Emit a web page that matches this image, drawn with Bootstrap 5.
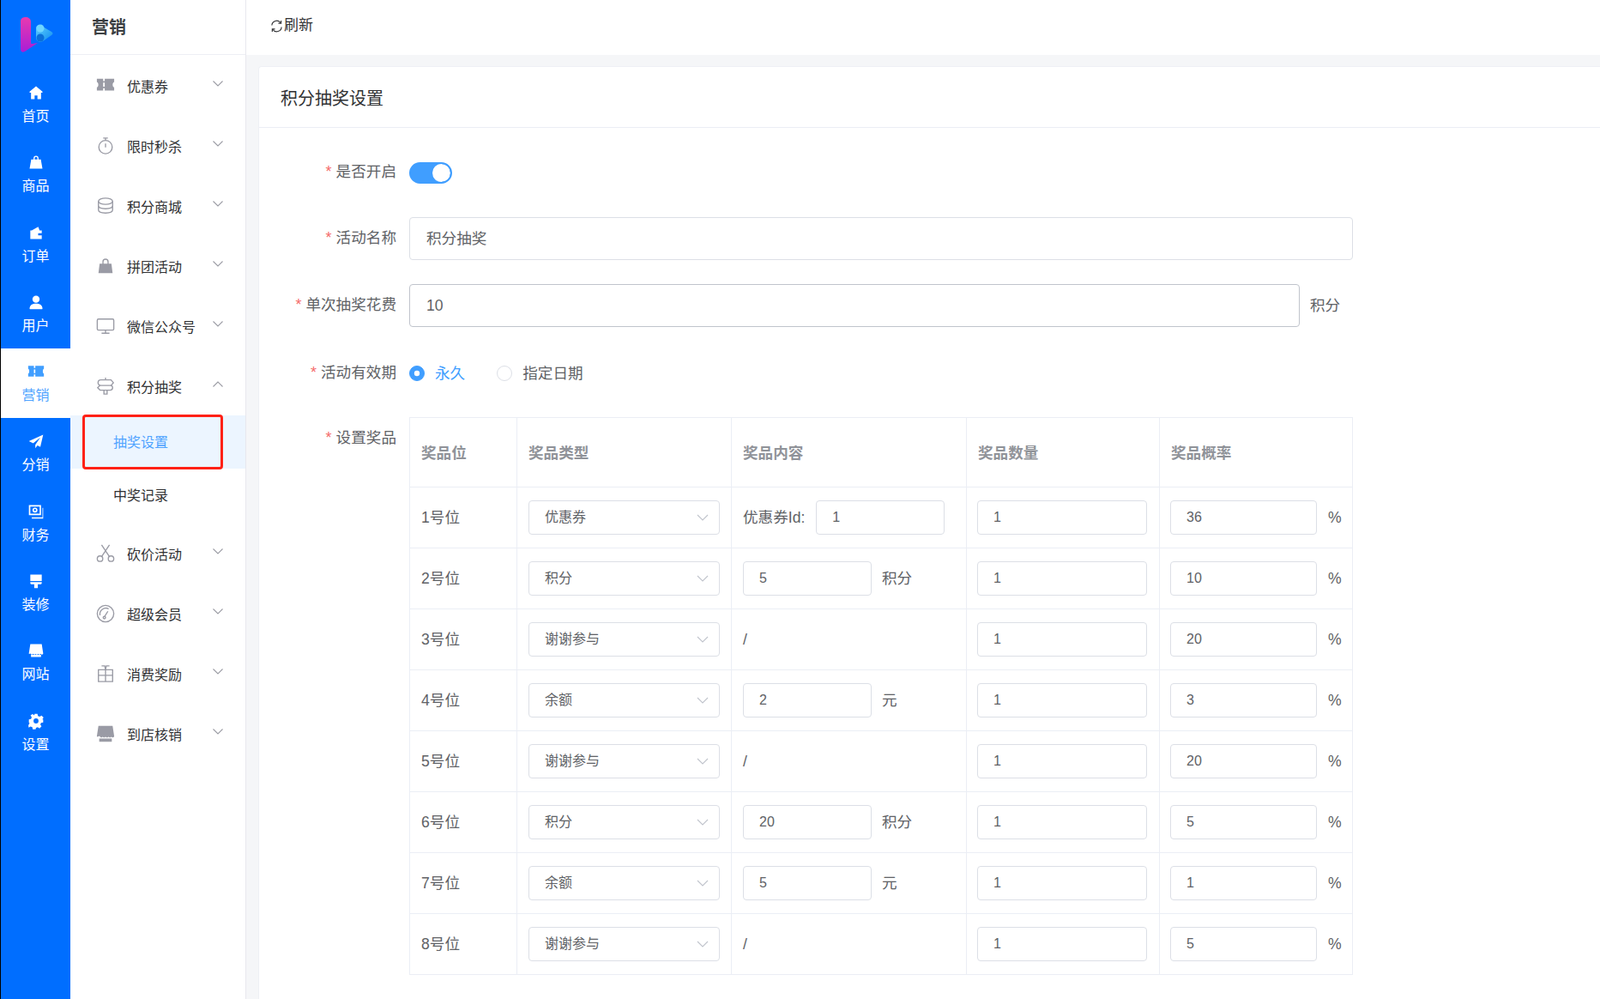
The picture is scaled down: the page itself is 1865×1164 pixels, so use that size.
<!DOCTYPE html>
<html lang="zh-CN">
<head>
  <meta charset="UTF-8">
  <title>积分抽奖设置</title>
  <link rel="stylesheet" href="https://cdn.jsdelivr.net/npm/bootstrap@5.3.0/dist/css/bootstrap.min.css">
  <style>
    html, body { height: 100%; overflow: hidden; }
    body { font-family: "Liberation Sans", "Noto Sans CJK SC", sans-serif; color: #606266; background: #f5f6f8; }
    .shell { width: 1865px; height: 1164px; }

    .rail { width: 82px; background: #006eff; border-left: 1px solid #000; color: #fff; flex: none; }
    .rail-logo { height: 81px; }
    .rail-item { height: 81.3px; font-size: 16px; padding-top: 17px; }
    .rail-item svg { width: 20px; height: 20px; fill: #fff; display: block; margin-bottom: 3px; }
    .rail-item span { line-height: 30px; }
    .rail-item.is-on { background: #fff; color: #4fa3ff; }
    .rail-item.is-on svg { fill: #409eff; }

    .side { width: 205px; background: #fff; border-right: 1px solid #e8e8ee; flex: none; }
    .side-head { height: 64px; border-bottom: 1px solid #eeeff4; font-size: 20px; font-weight: 700; color: #3c4043; padding-left: 25px; line-height: 64px; }
    .side-list { padding-top: 2px; }
    .side-row { height: 70px; padding-left: 30px; padding-right: 26px; font-size: 16px; color: #303133; }
    .side-row.is-open { margin-bottom: -2px; }
    .side-row .ico { width: 22px; height: 22px; margin-right: 14px; margin-top: -3px; flex: none; }
    .side-row .lbl { padding-top: 1px; }
    .side-row .chev { width: 12px; height: 7px; margin-left: auto; margin-top: -8px; }
    .side-sub { height: 62px; padding-left: 50px; padding-top: 2px; font-size: 16px; color: #303133; }
    .side-sub.is-on { background: #ecf5ff; color: #4fa3ff; }
    .mark-box { position: absolute; left: 14px; top: -1px; width: 164px; height: 64px; border: 3.5px solid #ff2116; border-radius: 4px; }
    .sub-end { margin-bottom: 3px; }

    .topbar { height: 64px; background: #fff; padding-left: 28px; padding-bottom: 4px; font-size: 17px; color: #303133; }
    .topbar svg { width: 15px; height: 15px; margin-right: 1px; margin-top: 1px; }
    .sheet { margin: 13px 0 0 14px; background: #fff; border: 1px solid #eef0f5; border-right: 0; border-radius: 4px 0 0 0; height: 1100px; }
    .sheet-title { height: 71px; line-height: 75px; padding-left: 25px; font-size: 20px; color: #303133; border-bottom: 1px solid #ebeef5; }
    .sheet-body { padding: 27px 0 0 0; width: 1275px; }

    .fr { margin-bottom: 27px; }
    .fr:nth-child(2) { margin-bottom: 28px; }
    .fr:nth-child(3) { margin-bottom: 29px; }
    .fr:nth-child(4) { margin-bottom: 26px; }
    .fr-label { width: 160px; height: 50px; flex: none; text-align: right; font-size: 17.6px; line-height: 49px; margin-right: 15px; }
    .fr-label i { color: #f56c6c; font-style: normal; margin-right: 5px; font-size: 18px; line-height: 0; }
    .fr-ctl { width: 1100px; min-height: 50px; }

    .form-control.big { height: 50px; font-size: 17.6px; color: #606266; padding: 0 19px 3px; border: 1px solid #dcdfe6; border-radius: 4px; }
    .form-control.big.hov { border-color: #c0c4cc; padding: 0 19px; }
    .unit-big { font-size: 17.6px; width: 62px; padding-left: 12px; }

    .form-switch .sw.form-check-input { width: 50px; height: 25px; margin: 0; background-color: #409eff; border: 2px solid #409eff; border-radius: 13px;
      background-image: url("data:image/svg+xml,%3csvg xmlns='http://www.w3.org/2000/svg' viewBox='-4 -4 8 8'%3e%3ccircle r='4' fill='%23fff'/%3e%3c/svg%3e"); }
    .rd.form-check-input { width: 18px; height: 18px; margin: 0 12px 0 0; border-color: #dcdfe6; }
    .rd.form-check-input:checked { background-color: #409eff; border-color: #409eff;
      background-image: url("data:image/svg+xml,%3csvg xmlns='http://www.w3.org/2000/svg' viewBox='-4 -4 8 8'%3e%3ccircle r='1.6' fill='%23fff'/%3e%3c/svg%3e"); }
    .rd-txt { font-size: 17.6px; }
    .rd-txt.is-on { color: #409eff; }
    .rd-gap { margin-right: 37px; }

    .prize { width: 1099px; table-layout: fixed; margin: 0; border-color: #ebeef5; font-size: 17.6px; }
    .prize > :not(caption) > * > * { padding: 0 13px; color: #606266; vertical-align: middle; box-shadow: none; }
    .prize thead th { height: 81px; padding-top: 2px; color: #909399; font-weight: 700; }
    .prize tbody td { height: 71px; }
    .prize tbody td.cell-qty { padding: 0 14px 0 12px; }
    .prize tbody td.cell-rate { padding-left: 12px; }
    .c1 { width: 125px; } .c2 { width: 250px; } .c3 { width: 274px; } .c4 { width: 225px; } .c5 { width: 225px; }
    .cell-in { height: 40px; font-size: 16px; color: #606266; border: 1px solid #dcdfe6; border-radius: 4px; padding: 0 18px; }
    .form-select.cell-in { width: 223px; background-size: 14px 8px; background-position: right 12px center;
      background-image: url("data:image/svg+xml,%3csvg xmlns='http://www.w3.org/2000/svg' viewBox='0 0 14 8'%3e%3cpath fill='none' stroke='%23c0c4cc' stroke-width='1.1' d='M1 1l6 6 6-6'/%3e%3c/svg%3e"); }
    .id-lbl { margin-right: 13px; }
    .w-150 { width: 150px; flex: none; }
    .w-pct { width: 171px; flex: none; }
    .pct { margin-left: 13px; }
    .chev-s { stroke: #9a9ba3; fill: none; stroke-width: 1.1; }
    .ico { color: #9a9ba5; }
  </style>
</head>
<body>
  <div class="shell d-flex">
    <nav class="rail d-flex flex-column">
      <div class="rail-logo d-flex align-items-center justify-content-center">
        <svg width="42" height="42" viewBox="0 0 42 42">
          <defs>
            <linearGradient id="lgP" x1="0" y1="0" x2="0" y2="1"><stop offset="0" stop-color="#e83ab0"/><stop offset="1" stop-color="#a91ed6"/></linearGradient>
            <linearGradient id="lgB" x1="0" y1="0" x2="1" y2="1"><stop offset="0" stop-color="#5fd0ff"/><stop offset="1" stop-color="#0f8cf0"/></linearGradient>
          </defs>
          <path fill="url(#lgP)" d="M3 5c0-4 3-5 6-5s6 2 6 5v25c0 1 1 1 2 1l6-1-15 10c-3 2-5 0-5-3z"/>
          <path fill="url(#lgB)" d="M21 13c0-3 3-5 6-3l12 7c2 1 2 3 0 4l-10 7c-3 2-8 0-8-4z"/>
          <circle cx="26" cy="13" r="4.500" fill="#6fd6ff"/>
          <circle cx="26" cy="24" r="4.500" fill="#0b6fd8"/>
        </svg>
      </div>
      <div id="rail"></div>
    </nav>

    <aside class="side">
      <div class="side-head">营销</div>
      <div class="side-list" id="side"></div>
    </aside>

    <main class="flex-grow-1 overflow-hidden">
      <div class="topbar d-flex align-items-center">
        <svg viewBox="0 0 16 16" fill="none" stroke="#303133" stroke-width="1.2"><path d="M2 7a6 6 0 0 1 11-3M14 9a6 6 0 0 1-11 3"/><path d="M13.500 1v3.400h-3.400M2.500 15v-3.400h3.400"/></svg>
        <span>刷新</span>
      </div>
      <div class="sheet">
        <div class="sheet-title">积分抽奖设置</div>
        <form class="sheet-body">
          <div class="fr d-flex">
            <label class="fr-label"><i>*</i>是否开启</label>
            <div class="fr-ctl d-flex align-items-center form-switch p-0">
              <input class="form-check-input sw" type="checkbox" checked>
            </div>
          </div>
          <div class="fr d-flex">
            <label class="fr-label"><i>*</i>活动名称</label>
            <div class="fr-ctl"><input class="form-control big" value="积分抽奖"></div>
          </div>
          <div class="fr d-flex">
            <label class="fr-label"><i>*</i>单次抽奖花费</label>
            <div class="fr-ctl d-flex align-items-center">
              <input class="form-control big hov" value="10">
              <span class="unit-big flex-shrink-0">积分</span>
            </div>
          </div>
          <div class="fr d-flex">
            <label class="fr-label"><i>*</i>活动有效期</label>
            <div class="fr-ctl d-flex align-items-center">
              <input class="form-check-input rd" type="radio" name="period" checked>
              <span class="rd-txt is-on rd-gap">永久</span>
              <input class="form-check-input rd" type="radio" name="period">
              <span class="rd-txt">指定日期</span>
            </div>
          </div>
          <div class="fr d-flex">
            <label class="fr-label"><i>*</i>设置奖品</label>
            <table class="table table-bordered prize">
              <colgroup><col class="c1"><col class="c2"><col class="c3"><col class="c4"><col class="c5"></colgroup>
              <thead><tr><th>奖品位</th><th>奖品类型</th><th>奖品内容</th><th>奖品数量</th><th>奖品概率</th></tr></thead>
              <tbody id="prizes"></tbody>
            </table>
          </div>
        </form>
      </div>
    </main>
  </div>

  <script src="https://cdn.jsdelivr.net/npm/bootstrap@5.3.0/dist/js/bootstrap.bundle.min.js"></script>
  <script>
    const railIcons = {
      home: '<path d="M12 3 3 10.500V12h2v9h5v-5h4v5h5v-9h2v-1.500z"/>',
      bag: '<path d="M8.500 8V6.500a3.500 3.500 0 0 1 7 0V8h3.200L21 21H3L5.300 8zm1.600 0h3.800V6.500a1.900 1.900 0 0 0-3.800 0z"/>',
      wallet: '<path d="M4 9h2l9-5 2 5h3v12H4zM15 13v3h5v-3z"/>',
      user: '<circle cx="12" cy="8" r="5"/><path d="M3 21c0-5 4-7 9-7s9 2 9 7c0 1-1 1-1 1H4s-1 0-1-1z"/>',
      ticket: '<path d="M1 4h8v3h2V4h12v4c-2 .5-2 6 0 7v4H11v-3H9v3H1v-4c2-1 2-6.500 0-7zm8 5v5h2V9z"/>',
      send: '<path d="M22 3 2 12l6 3 10-8-7 10v5l3-4 4 2z"/>',
      money: '<path fill-rule="evenodd" d="M2 3h17v14H2zm2 2v10h13V5zm6.500 1.500a3.500 3.500 0 1 1 0 7 3.500 3.500 0 0 1 0-7zm0 2a1.500 1.500 0 1 0 0 3 1.500 1.500 0 0 0 0-3zM21 7h1v15H6v-2h15z"/>',
      brush: '<path d="M4 3h16v9H4zM4 13.500h16V15c0 1-1 1.500-2 1.500h-3.500V22h-5v-5.500H6c-1 0-2-.5-2-1.500z"/>',
      store: '<path d="M4 3h16l2 13c0 2-3 2-3.500.5-.5 1.500-3 1.500-3.500 0-.5 1.500-3.500 1.500-3.500 0-.5 1.500-3 1.500-3.500 0-.5 1.500-3 1.500-3.500 0S2 18 2 16zM5 18h14v3H5z"/>',
      gear: '<path fill-rule="evenodd" d="M10 2h4l.6 3 2.500 1.100 2.600-1.700 2.800 2.800-1.700 2.600L22 10v4l-3 .6-1 2.400 1.700 2.600-2.800 2.800-2.600-1.700-2.300 1-.6 2h-4l-.6-3-2.500-1-2.600 1.700L1.300 18l1.700-2.600L2 14v-4l3-.6 1-2.500L4.300 4.300l2.800-1.900 2.600 1.700zM12 8.500a3.500 3.500 0 1 0 0 7 3.500 3.500 0 0 0 0-7z"/>'
    };
    const rail = [
      ['home', '首页'], ['bag', '商品'], ['wallet', '订单'], ['user', '用户'], ['ticket', '营销', true],
      ['send', '分销'], ['money', '财务'], ['brush', '装修'], ['store', '网站'], ['gear', '设置']
    ];
    document.getElementById('rail').innerHTML = rail.map(r =>
      `<div class="rail-item d-flex flex-column align-items-center ${r[2] ? 'is-on' : ''}">
        <svg viewBox="0 0 24 24">${railIcons[r[0]]}</svg><span>${r[1]}</span></div>`).join('');

    const line = 'fill="none" stroke="currentColor" stroke-width="1.5"';
    const sideIcons = {
      ticket: `<svg class="ico" viewBox="0 0 24 24"><path fill="currentColor" d="M1 3h8v3h2V3h12v4c-2.500.8-2.500 6 0 7v4H11v-3H9v3H1v-4c2.500-1 2.500-6 0-7zm8 5v5h2V8z"/></svg>`,
      watch: `<svg class="ico" viewBox="0 0 24 24" ${line}><circle cx="12" cy="13.500" r="8.500"/><path d="M9 2h6M12 2v3M12 9v5"/></svg>`,
      coins: `<svg class="ico" viewBox="0 0 24 24" ${line}><ellipse cx="12" cy="6" rx="9" ry="4"/><path d="M3 6v11c0 2.500 4 4 9 4s9-1.500 9-4V6M3 11.500c0 2.500 4 4 9 4s9-1.500 9-4"/></svg>`,
      bag: `<svg class="ico" viewBox="0 0 24 24"><path fill="currentColor" fill-rule="evenodd" d="M8 9V6.500a4 4 0 0 1 8 0V9h3.500L21 21H3L4.500 9zm1.500 0h5V6.500a2.500 2.500 0 0 0-5 0z"/></svg>`,
      screen: `<svg class="ico" viewBox="0 0 24 24" ${line}><rect x="1.500" y="3" width="21" height="14" rx="1.500"/><path d="M12 17v4M7 21h10"/></svg>`,
      sign: `<svg class="ico" viewBox="0 0 24 24" ${line}><path d="M12 1v3M6 4h13l3 3.500-3 3.500H6a3.500 3.500 0 0 1 0-7zM18 11a3 3 0 0 1 0 6H5l-3-3 3-3M10 17v5h4v-5"/></svg>`,
      cut: `<svg class="ico" viewBox="0 0 24 24" ${line}><circle cx="5" cy="18.500" r="3.500"/><circle cx="19" cy="18.500" r="3.500"/><path d="M7 16 17 1M17 16 7 1"/></svg>`,
      gauge: `<svg class="ico" viewBox="0 0 24 24" ${line}><circle cx="12" cy="12" r="10.500"/><path d="M5 14a7.500 7.500 0 0 1 11-8"/><circle cx="10.500" cy="17" r="1.500"/><path d="M11 15.500 15 9"/></svg>`,
      gift: `<svg class="ico" viewBox="0 0 24 24" ${line}><path d="M3 7h18v15H3zM3 14h18M12 7v15M7 2h4l1 5M17 2h-4l-1 5"/></svg>`,
      store: `<svg class="ico" viewBox="0 0 24 24"><path fill="currentColor" d="M3 2h18l2 13c0 2-3 2-3.500.5-.5 1.500-3 1.500-3.500 0-.5 1.500-3.500 1.500-4 0-.5 1.500-3 1.500-3.500 0-.5 1.500-3 1.500-3.500 0S1 17 1 15zM4 18h16v4H4z"/></svg>`
    };
    const chev = d => `<svg class="chev" viewBox="0 0 12 7"><path class="chev-s" d="${d}"/></svg>`;
    const side = [
      ['ticket', '优惠券'], ['watch', '限时秒杀'], ['coins', '积分商城'], ['bag', '拼团活动'], ['screen', '微信公众号'],
      ['sign', '积分抽奖', 'open'], ['cut', '砍价活动'], ['gauge', '超级会员'], ['gift', '消费奖励'], ['store', '到店核销']
    ];
    document.getElementById('side').innerHTML = side.map(s => {
      let html = `<div class="side-row d-flex align-items-center ${s[2] ? 'is-open' : ''}">${sideIcons[s[0]]}<span class="lbl">${s[1]}</span>${chev(s[2] ? 'M.5 6.500 6 1l5.500 5.500' : 'M.5.5 6 6 11.500.5')}</div>`;
      if (s[2]) {
        html += `<div class="side-sub is-on d-flex align-items-center position-relative">抽奖设置<div class="mark-box"></div></div>
                 <div class="side-sub sub-end d-flex align-items-center">中奖记录</div>`;
      }
      return html;
    }).join('');

    const prizes = [
      ['优惠券', 'id', '1', '1', '36'], ['积分', '积分', '5', '1', '10'], ['谢谢参与', '', '', '1', '20'], ['余额', '元', '2', '1', '3'],
      ['谢谢参与', '', '', '1', '20'], ['积分', '积分', '20', '1', '5'], ['余额', '元', '5', '1', '1'], ['谢谢参与', '', '', '1', '5']
    ];
    function contentCell(kind, val) {
      if (kind === 'id') return `<div class="d-flex align-items-center text-nowrap"><span class="id-lbl">优惠券Id:</span><input class="form-control cell-in w-150" value="${val}"></div>`;
      if (kind) return `<div class="d-flex align-items-center text-nowrap"><input class="form-control cell-in w-150" value="${val}"><span class="ms-2 ps-1">${kind}</span></div>`;
      return '/';
    }
    document.getElementById('prizes').innerHTML = prizes.map((p, i) => `<tr>
      <td>${i + 1}号位</td>
      <td><select class="form-select cell-in"><option>${p[0]}</option></select></td>
      <td>${contentCell(p[1], p[2])}</td>
      <td class="cell-qty"><input class="form-control cell-in" value="${p[3]}"></td>
      <td class="cell-rate"><div class="d-flex align-items-center"><input class="form-control cell-in w-pct" value="${p[4]}"><span class="pct">%</span></div></td>
    </tr>`).join('');
  </script>
</body>
</html>
